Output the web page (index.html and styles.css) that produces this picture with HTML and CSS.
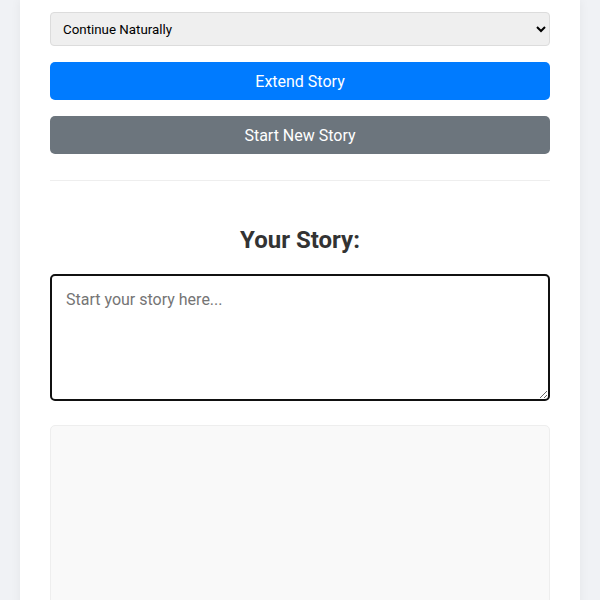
FILE: index.html
```html
<!DOCTYPE html>
<html lang="en">
<head>
<meta charset="utf-8">
<title>Story Extender</title>
<link rel="stylesheet" href="styles.css">
</head>
<body>
<main class="card">
  <select class="mode-select">
    <option>Continue Naturally</option>
    <option>Add a Twist</option>
    <option>Wrap It Up</option>
  </select>
  <button class="btn btn-primary" type="button">Extend Story</button>
  <button class="btn btn-secondary" type="button">Start New Story</button>
  <hr class="divider">
  <h2 class="story-title">Your Story:</h2>
  <textarea class="story-input" placeholder="Start your story here..."></textarea>
  <div class="story-output"></div>
</main>
</body>
</html>
```
FILE: styles.css
```css
* { box-sizing: border-box; }
html, body { margin: 0; padding: 0; }
body {
  background: #f0f2f5;
  font-family: Roboto, "Liberation Sans", Arial, sans-serif;
  color: #333;
}
.card {
  margin: 0 20px;
  background: #fff;
  padding: 12px 30px 40px;
  min-height: 700px;
  box-shadow: 0 0 10px rgba(0,0,0,0.06);
  display: flex;
  flex-direction: column;
}
.mode-select {
  width: 100%;
  height: 34px;
  padding: 0 8px 0 8px;
  font-family: Roboto, "Liberation Sans", Arial, sans-serif;
  font-size: 13.333px;
  color: #000;
  background-color: #efefef;
  border: 1px solid #dcdcdc;
  border-radius: 4px;
  margin: 0 0 16px;
}
.btn {
  width: 100%;
  height: 38px;
  border: none;
  border-radius: 5px;
  color: #fff;
  font-family: Roboto, "Liberation Sans", Arial, sans-serif;
  font-size: 16px;
  margin: 0 0 16px;
  cursor: pointer;
}
.btn-primary { background: #007bff; }
.btn-secondary { background: #6c757d; }
.divider {
  border: none;
  border-top: 1px solid #eee;
  margin: 10px 0 0;
  width: 100%;
}
.story-title {
  text-align: center;
  font-size: 24px;
  line-height: 28px;
  font-weight: 700;
  color: #333;
  margin: 45px 0 20px;
}
.story-input {
  width: 100%;
  height: 127px;
  padding: 14px 14px 12px;
  font-family: Roboto, "Liberation Sans", Arial, sans-serif;
  font-size: 16px;
  line-height: 20px;
  color: #333;
  border: 2px solid #111;
  border-radius: 5px;
  resize: vertical;
  outline: none;
  margin: 0 0 24px;
}
.story-input::placeholder { color: #757575; }
.story-output {
  width: 100%;
  min-height: 220px;
  background: #f9f9f9;
  border: 1px solid #eee;
  border-radius: 5px;
}
```
